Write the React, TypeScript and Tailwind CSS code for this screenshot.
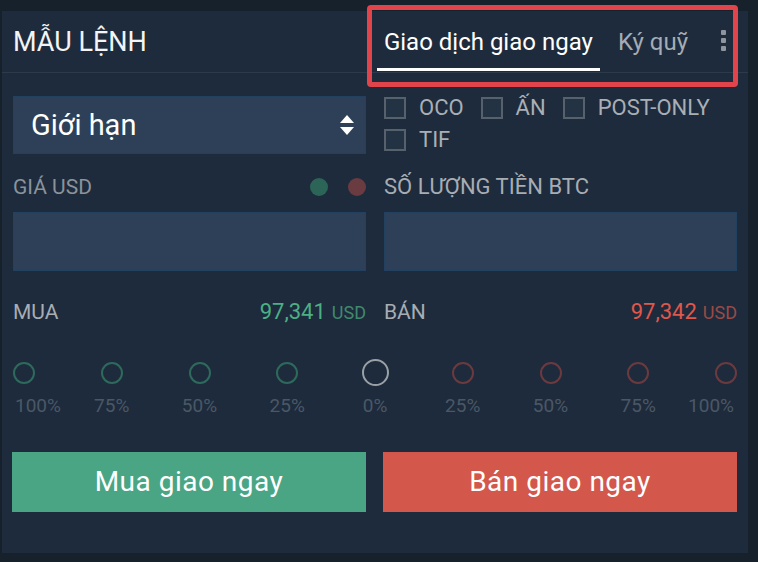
import React from "react";

const leftStops = ["100%", "75%", "50%", "25%"];
const rightStops = ["25%", "50%", "75%", "100%"];

function Check({ label }: { label: string }) {
  return (
    <div className="flex items-center gap-[13px]">
      <span className="w-[22px] h-[22px] border-2 border-[#56616c] bg-[#243344]" />
      <span className="text-[22px] leading-none text-[#a9afb5]">{label}</span>
    </div>
  );
}

function Stop({ pct, tone, edge }: { pct: string; tone: "buy" | "sell" | "mid"; edge?: "left" | "right" }) {
  const ring =
    tone === "buy"
      ? "w-[22px] h-[22px] border-2 border-[#2d6a5c]"
      : tone === "sell"
      ? "w-[22px] h-[22px] border-2 border-[#6b3a3f]"
      : "w-[27px] h-[27px] border-2 border-[#9aa0a6]";
  const labelPos = edge === "left" ? "self-start ml-[2px]" : edge === "right" ? "self-end mr-[3px]" : "";
  return (
    <div className="w-[22px] h-[56px] flex flex-col items-center justify-between">
      <div className="h-[27px] flex items-center">
        <span className={`rounded-full ${ring}`} />
      </div>
      <span className={`text-[19px] leading-none text-[#4a5866] whitespace-nowrap ${labelPos}`}>{pct}</span>
    </div>
  );
}

export default function App() {
  return (
    <div
      className="relative w-[758px] h-[562px] bg-[#17212c] pt-[11px] pl-[2px] overflow-hidden"
      style={{ fontFamily: "Roboto, 'Noto Sans', sans-serif" }}
    >
      <div className="w-[746px] h-[542px] bg-[#1e2b3c] px-[11px]">
        {/* header */}
        <div className="h-[62px] -mx-[11px] px-[11px] flex items-center justify-between border-b border-[#2d3a4a]">
          <h1 className="text-[27px] text-[#f2f4f6] leading-none mt-[1px]">MẪU LỆNH</h1>
          <div className="flex items-stretch h-full mr-[11px]">
            <div className="relative flex items-center px-[7px]">
              <span className="text-[24px] text-white leading-none">Giao dịch giao ngay</span>
              <span className="absolute left-0 right-0 bottom-[1px] h-[3px] bg-white" />
            </div>
            <div className="flex items-center pl-[18px] pr-[33px]">
              <span className="text-[24px] text-[#a5acb3] leading-none">Ký quỹ</span>
            </div>
            <div className="flex flex-col items-center gap-[3px] pb-[3px] justify-center">
              <span className="w-[5px] h-[5px] rounded-[1px] bg-[#8d959d]" />
              <span className="w-[5px] h-[5px] rounded-[1px] bg-[#8d959d]" />
              <span className="w-[5px] h-[5px] rounded-[1px] bg-[#8d959d]" />
            </div>
          </div>
        </div>

        {/* type + options */}
        <div className="grid grid-cols-2 gap-x-[18px] mt-[23px]">
          <div className="h-[58px] bg-[#2e4058] border border-[#22405f] flex items-center justify-between pl-[17px] pr-[10px]">
            <span className="text-[29px] text-white leading-none">Giới hạn</span>
            <svg width="16" height="22" viewBox="0 0 16 22">
              <path d="M8 1 L15 9 H1 Z" fill="#ffffff" />
              <path d="M8 21 L15 13 H1 Z" fill="#ffffff" />
            </svg>
          </div>
          <div className="flex flex-col gap-[10px] mt-[1px]">
            <div className="flex items-center gap-[17px]">
              <Check label="OCO" />
              <Check label="ẤN" />
              <Check label="POST-ONLY" />
            </div>
            <Check label="TIF" />
          </div>
        </div>

        {/* price / amount */}
        <div className="grid grid-cols-2 gap-x-[18px] mt-[24px]">
          <div>
            <div className="flex items-center justify-between h-[18px]">
              <span className="text-[21px] text-[#8b939b] leading-none">GIÁ USD</span>
              <div className="flex items-center gap-[20px]">
                <span className="w-[18px] h-[18px] rounded-full bg-[#2c6558]" />
                <span className="w-[18px] h-[18px] rounded-full bg-[#6a3b40]" />
              </div>
            </div>
            <div className="h-[59px] mt-[16px] bg-[#2e4058] border border-[#22405f]" />
          </div>
          <div>
            <div className="flex items-center h-[18px]">
              <span className="text-[22px] text-[#a7adb3] leading-none">SỐ LƯỢNG TIỀN BTC</span>
            </div>
            <div className="h-[59px] mt-[16px] bg-[#2e4058] border border-[#22405f]" />
          </div>
        </div>

        {/* best prices */}
        <div className="grid grid-cols-2 gap-x-[18px] mt-[31px]">
          <div className="flex items-center justify-between h-[20px]">
            <span className="text-[21px] text-[#a7adb3] leading-none">MUA</span>
            <span className="leading-none">
              <span className="text-[22px] text-[#4caf85]">97,341</span>
              <span className="text-[18px] text-[#3f8a6d] ml-[6px]">USD</span>
            </span>
          </div>
          <div className="flex items-center justify-between h-[20px]">
            <span className="text-[21px] text-[#a7adb3] leading-none">BÁN</span>
            <span className="leading-none">
              <span className="text-[22px] text-[#e0574b]">97,342</span>
              <span className="text-[18px] text-[#9a4a46] ml-[6px]">USD</span>
            </span>
          </div>
        </div>

        {/* percent slider */}
        <div className="flex justify-between mt-[37px]">
          {leftStops.map((p, i) => (
            <Stop key={"b" + p} pct={p} tone="buy" edge={i === 0 ? "left" : undefined} />
          ))}
          <Stop pct="0%" tone="mid" />
          {rightStops.map((p, i) => (
            <Stop key={"s" + p} pct={p} tone="sell" edge={i === 3 ? "right" : undefined} />
          ))}
        </div>

        {/* actions */}
        <div className="grid grid-cols-2 gap-x-[17px] mt-[37px] -ml-[1px]">
          <button className="h-[60px] bg-[#4aa584] text-white text-[28px] tracking-[0.5px] leading-none">Mua giao ngay</button>
          <button className="h-[60px] bg-[#d3574b] text-white text-[28px] tracking-[0.5px] leading-none">Bán giao ngay</button>
        </div>
      </div>

      {/* highlight annotation */}
      <div className="absolute left-[367px] top-[5px] w-[371px] h-[82px] border-[5px] border-[#e2444c] rounded-[4px] pointer-events-none" />
    </div>
  );
}
